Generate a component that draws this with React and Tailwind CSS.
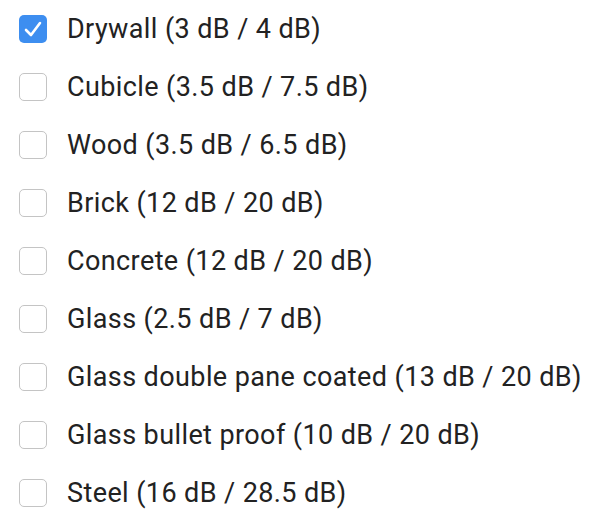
import React from 'react';

const materials = [
  { label: 'Drywall (3 dB / 4 dB)', checked: true },
  { label: 'Cubicle (3.5 dB / 7.5 dB)' },
  { label: 'Wood (3.5 dB / 6.5 dB)' },
  { label: 'Brick (12 dB / 20 dB)' },
  { label: 'Concrete (12 dB / 20 dB)' },
  { label: 'Glass (2.5 dB / 7 dB)' },
  { label: 'Glass double pane coated (13 dB / 20 dB)' },
  { label: 'Glass bullet proof (10 dB / 20 dB)' },
  { label: 'Steel (16 dB / 28.5 dB)' },
];

const Box = ({ checked }) =>
  checked ? (
    <span className="flex h-[28px] w-[28px] shrink-0 items-center justify-center rounded-[5px] bg-[#3d8ef0]">
      <svg width="28" height="28" viewBox="0 0 28 28" fill="none">
        <path d="M7 15 L12 20 L21 8" stroke="white" strokeWidth="2.6" strokeLinecap="round" strokeLinejoin="round" />
      </svg>
    </span>
  ) : (
    <span className="h-[28px] w-[28px] shrink-0 rounded-[5px] border border-[#c4c4c4] bg-white" />
  );

const App = () => {
  return (
    <div className="h-[528px] w-[606px] bg-white pl-[19px]" style={{ fontFamily: 'Roboto, "Liberation Sans", sans-serif' }}>
      {materials.map((m) => (
        <label key={m.label} className="flex h-[58px] items-center">
          <Box checked={m.checked} />
          <span className="ml-[20px] whitespace-nowrap text-[27px] leading-none tracking-[0.4px] text-[#222]">{m.label}</span>
        </label>
      ))}
    </div>
  );
};

export default App;
